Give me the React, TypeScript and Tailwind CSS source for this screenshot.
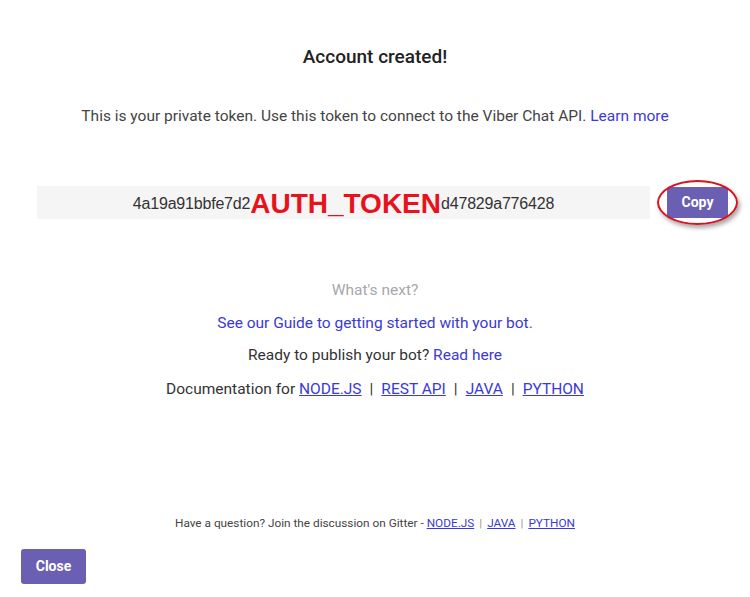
export default function App() {
  const link = 'text-[#3a3ad6]'
  return (
    <main
      className="w-[750px] h-[597px] bg-white flex flex-col items-center text-[#333]"
      style={{ fontFamily: 'Roboto, "Liberation Sans", sans-serif' }}
    >
      <h1 className="mt-[45px] text-[19px] leading-[24px] font-medium text-[#222]">Account created!</h1>
      <p className="mt-[37px] text-[15.5px] leading-[20px] text-[#444]">
        This is your private token. Use this token to connect to the Viber Chat API.{' '}
        <a className={link}>Learn more</a>
      </p>

      <div className="mt-[60px] w-full flex items-center pl-[37px]">
        <div
          className="w-[613px] h-[33px] bg-[#f5f5f5] flex items-center justify-center text-[16px] text-[#333]"
          style={{ fontFamily: '"Liberation Sans", Arial, sans-serif' }}
        >
          <span className="tracking-[-0.2px] pt-[2px]">4a19a91bbfe7d2</span>
          <span className="text-[28px] font-bold text-[#e8121c] leading-none pt-[2px]">AUTH_TOKEN</span>
          <span className="tracking-[-0.2px] pt-[2px]">d47829a776428</span>
        </div>
        <div className="relative ml-[17px]">
          <button className="w-[61px] h-[31px] rounded-[3px] bg-[#6a5fb3] text-white text-[14px] font-bold">
            Copy
          </button>
          <div className="absolute left-[-10px] top-[-7px] w-[81px] h-[45px] rounded-[50%] border-[2px] border-[#d8121e] shadow-[2px_3px_4px_rgba(0,0,0,0.35)]" />
        </div>
      </div>

      <p className="mt-[62px] text-[15.5px] leading-[19px] text-[#a8a8a8]">What&apos;s next?</p>
      <p className={`mt-[14px] text-[15.5px] leading-[18px] ${link}`}>See our Guide to getting started with your bot.</p>
      <p className="mt-[14px] text-[15.5px] leading-[18px] text-[#333]">
        Ready to publish your bot? <a className={link}>Read here</a>
      </p>
      <p className="mt-[16px] text-[15.5px] leading-[18px] text-[#333]">
        Documentation for <a className={`${link} underline`}>NODE.JS</a>
        <span className="mx-[8px]">|</span>
        <a className={`${link} underline`}>REST API</a>
        <span className="mx-[8px]">|</span>
        <a className={`${link} underline`}>JAVA</a>
        <span className="mx-[8px]">|</span>
        <a className={`${link} underline`}>PYTHON</a>
      </p>

      <p className="mt-[118px] text-[11.8px] leading-[14px] text-[#444]">
        Have a question? Join the discussion on Gitter - <a className={`${link} underline`}>NODE.JS</a>
        <span className="mx-[5px] text-[#999]">|</span>
        <a className={`${link} underline`}>JAVA</a>
        <span className="mx-[5px] text-[#999]">|</span>
        <a className={`${link} underline`}>PYTHON</a>
      </p>

      <div className="w-full mt-[19px] pl-[21px]">
        <button className="w-[65px] h-[35px] rounded-[3px] bg-[#6a5fb3] text-white text-[14px] font-bold">
          Close
        </button>
      </div>
    </main>
  )
}
